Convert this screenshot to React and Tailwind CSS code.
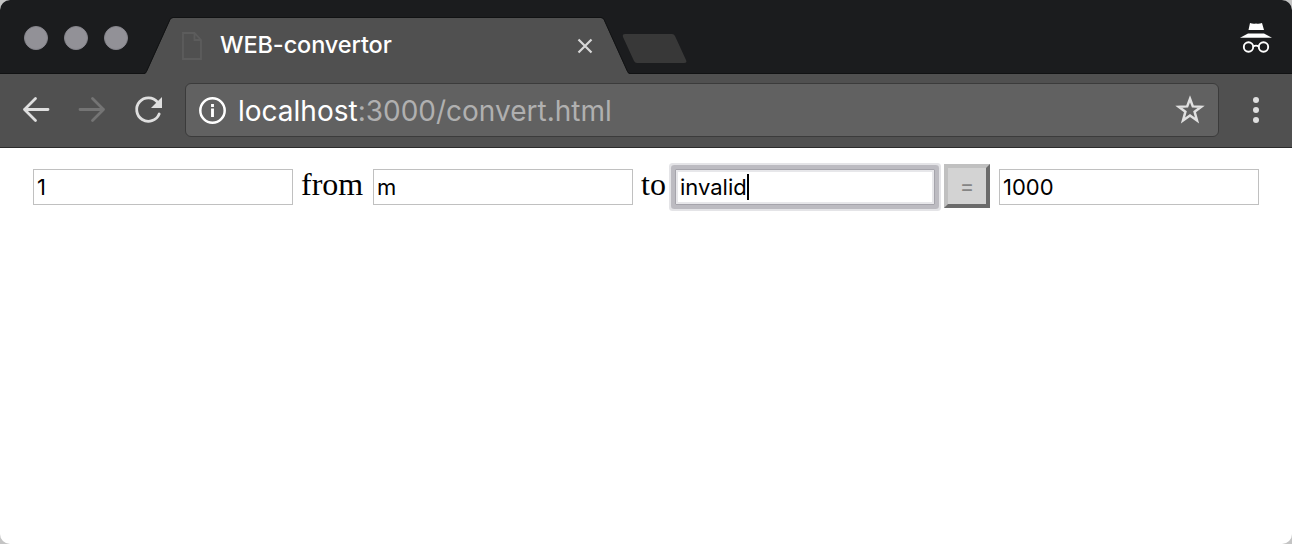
const inputText = "font-['Inter',sans-serif] text-[22px] leading-[34px] text-black whitespace-pre";

function WindowButtons() {
  return (
    <div className="flex gap-4 pl-6 pt-[26px]">
      {[0, 1, 2].map((i) => (
        <span key={i} className="size-6 rounded-full border border-[#85848b] bg-[#929197]" />
      ))}
    </div>
  );
}

function Tab() {
  return (
    <div className="relative ml-4 mt-[17px] h-[57px] w-[486px]">
      <svg className="absolute inset-0" width="486" height="57" viewBox="0 0 486 57">
        <path d="M0 57 Q1.500 57 2.500 55 L26 3 Q27 1 29 1 L457 1 Q459 1 460 3 L483.500 55 Q484.500 57 486 57 Z" fill="#505050" />
        <path d="M0 56.500 Q1.500 56.500 2.500 54.500 L26 2.500 Q27 .5 29 .5 L457 .5 Q459 .5 460 2.500 L483.500 54.500 Q484.500 56.500 486 56.500" fill="none" stroke="#111213" strokeWidth="1" />
      </svg>
      <div className="relative flex h-full items-start pl-[38px]">
        <svg className="mt-[15px]" width="20" height="28" viewBox="0 0 20 28" fill="none" stroke="#5c5c5c" strokeWidth="1.800">
          <path d="M1 1H12.500L19 8V27H1ZM12.500 1V8H19" />
        </svg>
        <span className="ml-[18px] mt-[12px] w-[200px] whitespace-nowrap font-['Inter',sans-serif] text-[23.500px] font-medium leading-8 tracking-[-0.1px] text-white">
          WEB-convertor
        </span>
        <svg className="ml-[157px] mt-[21px]" width="16" height="16" viewBox="0 0 16 16" stroke="#d8d8d8" strokeWidth="2.200">
          <path d="M1.500 1.500L14.500 14.500M14.500 1.500L1.500 14.500" />
        </svg>
      </div>
    </div>
  );
}

function Incognito() {
  return (
    <svg className="mr-5 mt-[22px]" width="32" height="32" viewBox="0 0 32 32">
      <path d="M10 1Q13 2.200 16 1.500Q19 2.200 22 1L24 8H8.500Z" fill="#fff" />
      <path d="M8 11.500H24L32 15.800H0Z" fill="#fff" />
      <g fill="none" stroke="#fff" strokeWidth="1.900">
        <circle cx="8.500" cy="25" r="4.700" />
        <circle cx="23.500" cy="25" r="4.700" />
        <path d="M13.200 24.500Q16 22.800 18.800 24.500" />
      </g>
    </svg>
  );
}

function Toolbar() {
  return (
    <div className="flex h-[74px] items-start border-b border-[#2b2b2b] bg-[#505050]">
      <svg className="ml-[22px] mt-[22px]" width="28" height="28" viewBox="0 0 28 28" fill="none" stroke="#dfdfdf" strokeWidth="2.800" strokeLinecap="round" strokeLinejoin="round">
        <path d="M26 13.500H2.500M13.500 2.500L2.500 13.500L13.500 24.500" />
      </svg>
      <svg className="ml-[28px] mt-[22px]" width="28" height="28" viewBox="0 0 28 28" fill="none" stroke="#747474" strokeWidth="2.800" strokeLinecap="round" strokeLinejoin="round">
        <path d="M2 13.500H25.500M14.500 2.500L25.500 13.500L14.500 24.500" />
      </svg>
      <svg className="ml-[28px] mt-[22px]" width="30" height="28" viewBox="0 0 30 28" fill="none">
        <path d="M23.500 6.200A11.700 11.700 0 1 0 25.200 18" stroke="#dfdfdf" strokeWidth="2.800" strokeLinecap="round" />
        <path d="M28 1V12H17Z" fill="#dfdfdf" />
      </svg>
      <div className="ml-[21px] mt-[9px] flex h-[54px] w-[1034px] items-start rounded-[6px] border border-[#3b3b3b] bg-[#616161]">
        <svg className="ml-[13px] mt-[13px]" width="27" height="27" viewBox="0 0 27 27" fill="none">
          <circle cx="13.500" cy="13.500" r="12.200" stroke="#fff" strokeWidth="2.500" />
          <path d="M13.500 11.500V20M13.500 7V10" stroke="#fff" strokeWidth="2.900" />
        </svg>
        <span className="ml-[12px] mt-[9px] w-[380px] whitespace-nowrap font-['Inter',sans-serif] text-[28px] leading-9 text-[#b0b0b0]">
          <span className="text-white">localhost</span>:3000/convert.html
        </span>
        <svg className="ml-[557px] mt-[11px]" width="30" height="30" viewBox="0 0 30 30" fill="none" stroke="#e0e0e0" strokeWidth="2.500">
          <path d="M15 3.800L17.800 11.400L26.200 11.800L19.600 16.800L22 25.500L15 20.600L8 25.500L10.400 16.800L3.800 11.800L12.200 11.400Z" />
        </svg>
      </div>
      <div className="ml-[34px] mt-[23px] flex flex-col gap-1">
        {[0, 1, 2].map((i) => (
          <span key={i} className="size-1.5 rounded-full bg-[#dfdfdf]" />
        ))}
      </div>
    </div>
  );
}

function Field({ value, className = "" }) {
  return (
    <div className={`h-9 w-[260px] border border-[#c0c0c0] bg-white pl-[3px] ${inputText} ${className}`}>{value}</div>
  );
}

function Word({ children, className }) {
  return (
    <span className={`-mt-[3px] whitespace-nowrap font-['Liberation_Serif',serif] text-[32px] leading-9 text-black ${className}`}>
      {children}
    </span>
  );
}

export default function App() {
  return (
    <div className="h-[544px] w-[1292px] overflow-hidden bg-[#c4c4c4]">
      <div className="flex h-full flex-col overflow-hidden rounded-[10px] bg-white">
        <div className="flex h-[74px] shrink-0 items-start border-b border-[#111213] bg-[#1b1c1e]">
          <WindowButtons />
          <Tab />
          <svg className="-ml-2 mt-[34px]" width="66" height="29" viewBox="0 0 66 29">
            <path d="M3 0H50Q52 0 53 2L64 26Q65.500 29 62 29H15Q13 29 12 27L1 3Q0 0 3 0Z" fill="#383838" />
          </svg>
          <div className="grow" />
          <Incognito />
        </div>
        <Toolbar />
        <div className="flex items-start pl-[33px] pt-[21px]">
          <Field value="1" />
          <Word className="ml-[8px] w-[72px]">from</Word>
          <Field value="m" />
          <Word className="ml-[8px] w-[34px]">to</Word>
          <div className="flex h-9 w-[260px] items-start border border-[#a5a4ab] bg-white pl-1 shadow-[inset_0_0_0_2px_#e7e7ea,0_0_0_4px_#bcbbc1,0_0_0_6px_#e4e4e7] rounded-[1px]">
            <span className={`${inputText}`}>invalid</span>
            <span className="mt-1 h-[26px] w-[2px] bg-black" />
          </div>
          <div className="-mt-[5px] ml-[9px] flex h-11 w-[46px] items-center justify-center border-4 border-b-[#6b6b6b] border-l-[#c0c0c0] border-r-[#6b6b6b] border-t-[#c0c0c0] bg-[#d3d3d3] font-['Inter',sans-serif] text-[22px] leading-none text-[#858585]">
            =
          </div>
          <Field value="1000" className="ml-[9px]" />
        </div>
      </div>
    </div>
  );
}
